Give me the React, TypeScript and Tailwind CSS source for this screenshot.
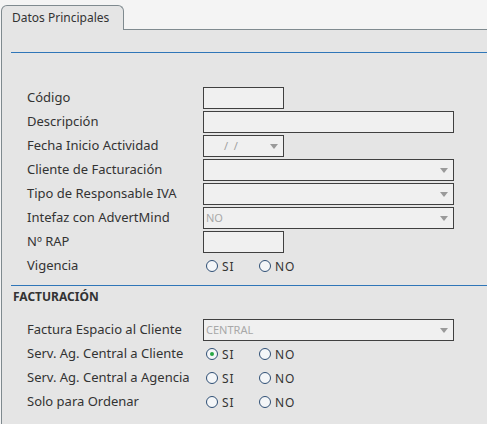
import React from 'react';

const font = { fontFamily: '"Noto Sans", "DejaVu Sans", sans-serif' };

function Arrow() {
  return (
    <svg width="8" height="5" viewBox="0 0 8 5" className="mr-[5px]">
      <path d="M0 0h8L4 5z" fill="#9a9a9a" />
    </svg>
  );
}

function TextBox({ wide }: { wide?: boolean }) {
  return (
    <div
      className={`h-[22px] border border-[#404040] bg-[#f0f0f0] ${wide ? 'w-[251px]' : 'w-[81px]'}`}
    />
  );
}

function Select({ value, wide = true, date }: { value?: string; wide?: boolean; date?: boolean }) {
  return (
    <div
      className={`flex h-[22px] items-center justify-between border border-[#404040] bg-[#f0f0f0] ${wide ? 'w-[251px]' : 'w-[81px]'}`}
    >
      {date ? (
        <span className="pl-[20px] text-[11px] text-[#a0a0a0]">/&nbsp;&nbsp;/</span>
      ) : (
        <span className="pl-[2px] text-[11px] text-[#a8a8a8]">{value}</span>
      )}
      <Arrow />
    </div>
  );
}

function Radio({ label, checked }: { label: string; checked?: boolean }) {
  return (
    <div className="flex w-[53px] items-center">
      <span className="flex h-[12px] w-[12px] items-center justify-center rounded-full border border-[#2f4f75] bg-[#f4f6f8]">
        {checked && <span className="h-[4px] w-[4px] rounded-full bg-[#28a745]" />}
      </span>
      <span className="ml-[4px] mt-[2px] text-[12px] tracking-[1px] text-[#333]">{label}</span>
    </div>
  );
}

function SiNo({ si }: { si?: boolean }) {
  return (
    <div className="flex pl-[3px]">
      <Radio label="SI" checked={si} />
      <Radio label="NO" />
    </div>
  );
}

function Row({ label, children }: { label: string; children: React.ReactNode }) {
  return (
    <div className="flex h-[22px] items-center">
      <div className="w-[176px] text-[13px] text-[#333]">{label}</div>
      {children}
    </div>
  );
}

export default function App() {
  return (
    <div className="h-[424px] overflow-hidden bg-[#f4f4f4] pl-[1px] pt-[5px]" style={font}>
      <div className="flex">
        <div className="h-[25px] w-[123px] rounded-t-[6px] border border-b-0 border-[#7f8a8f] bg-[#e5e5e5] pl-[10px] pt-[5px] text-[12px] leading-[14px] text-[#333]">
          Datos Principales
        </div>
        <div className="flex-1 border-b border-[#7f8a8f]" />
      </div>
      <div className="h-[400px] border-l border-[#7f8a8f] bg-[#e5e5e5] pt-[22px]">
        <div className="ml-[9px] border-t border-[#2f76b8]" />
        <div className="flex flex-col gap-[2px] pl-[25px] pt-[34px]">
          <Row label="Código">
            <TextBox />
          </Row>
          <Row label="Descripción">
            <TextBox wide />
          </Row>
          <Row label="Fecha Inicio Actividad">
            <Select wide={false} date />
          </Row>
          <Row label="Cliente de Facturación">
            <Select />
          </Row>
          <Row label="Tipo de Responsable IVA">
            <Select />
          </Row>
          <Row label="Intefaz con AdvertMind">
            <Select value="NO" />
          </Row>
          <Row label="Nº RAP">
            <TextBox />
          </Row>
          <Row label="Vigencia">
            <SiNo />
          </Row>
        </div>
        <div className="ml-[9px] mt-[8px] border-t border-[#2f76b8]" />
        <div className="pl-[11px] pt-[3px] text-[12px] font-bold leading-[16px] text-[#333]">FACTURACIÓN</div>
        <div className="flex flex-col gap-[2px] pl-[25px] pt-[14px]">
          <Row label="Factura Espacio al Cliente">
            <Select value="CENTRAL" />
          </Row>
          <Row label="Serv. Ag. Central a Cliente">
            <SiNo si />
          </Row>
          <Row label="Serv. Ag. Central a Agencia">
            <SiNo />
          </Row>
          <Row label="Solo para Ordenar">
            <SiNo />
          </Row>
        </div>
      </div>
    </div>
  );
}
